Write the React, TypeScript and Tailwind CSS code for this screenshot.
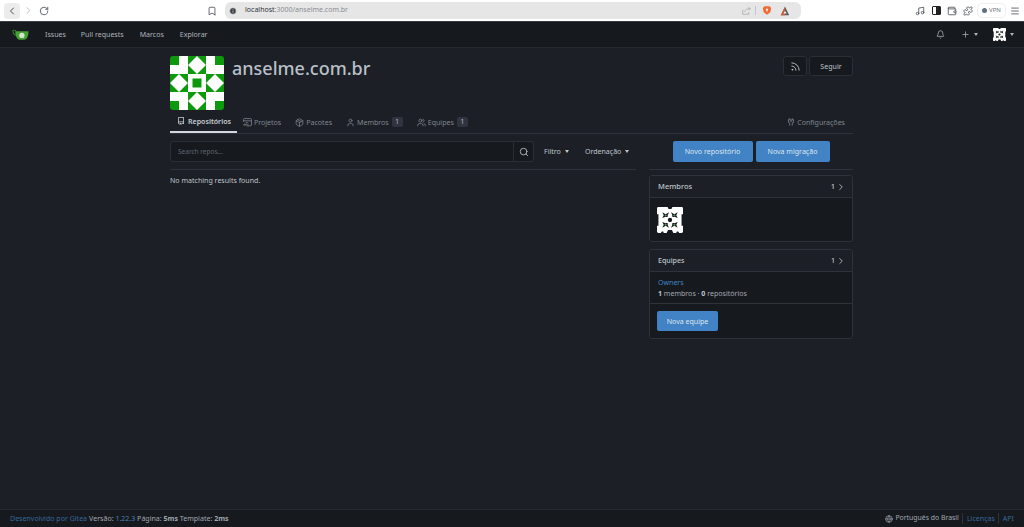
import { Bell, Bookmark, ChevronLeft, ChevronRight, Globe, Info, Menu, Music, Package, Plus, Puzzle, RotateCw, Rss, Search, User, Users, Wallet } from 'lucide-react';
import type { ReactNode } from 'react';

function Caret() {
  return <span className="ml-[4px] inline-block w-0 h-0 border-x-[2.5px] border-x-transparent border-t-[3px] border-t-current" />;
}

function Counter({ value }: { value: number }) {
  return <span className="ml-[1px] w-[11px] h-[10px] leading-[10px] text-center rounded-[2px] bg-[#2f3440] text-[#b8bdc5] text-[6.5px]">{value}</span>;
}

function RepoIcon() {
  return (
    <svg viewBox="0 0 16 16" fill="currentColor" className="w-[8px] h-[8px] shrink-0 mr-[1px]">
      <path d="M2 2.5A2.5 2.5 0 0 1 4.5 0h8.75a.75.75 0 0 1 .75.75v12.5a.75.75 0 0 1-.75.75h-2.5a.75.75 0 0 1 0-1.5h1.75v-2h-8a1 1 0 0 0-.714 1.7.75.75 0 1 1-1.072 1.05A2.495 2.495 0 0 1 2 11.5Zm10.5-1h-8a1 1 0 0 0-1 1v6.708A2.486 2.486 0 0 1 4.5 9h8ZM5 12.25a.25.25 0 0 1 .25-.25h3.5a.25.25 0 0 1 .25.25v3.25a.25.25 0 0 1-.4.2l-1.45-1.087a.249.249 0 0 0-.3 0L5.4 15.7a.25.25 0 0 1-.4-.2Z" />
    </svg>
  );
}

function ProjectIcon() {
  return (
    <svg viewBox="0 0 16 16" fill="none" stroke="currentColor" strokeWidth="1.4" className="w-[9px] h-[9px] shrink-0">
      <path d="M1 7V2.5A1.5 1.5 0 0 1 2.5 1h11A1.5 1.5 0 0 1 15 2.5v10a1.5 1.5 0 0 1-1.5 1.5H6" />
      <path d="M1 5h14 M5 8h3 M5 11h5 M0.5 12h3.5 M3 10l1.5 2L3 14" />
    </svg>
  );
}

function ToolsIcon() {
  return (
    <svg viewBox="0 0 16 16" fill="currentColor" className="w-[8px] h-[8px] shrink-0">
      <path d="M5.433 2.304A4.492 4.492 0 0 0 3.5 6c0 1.598.832 3.002 2.09 3.802.518.328.929.923.902 1.64v.008l-.164 3.337a.75.75 0 1 1-1.498-.073l.163-3.33c.002-.085-.05-.216-.207-.316A5.996 5.996 0 0 1 2 6a5.993 5.993 0 0 1 2.567-4.92 1.482 1.482 0 0 1 1.673-.04c.462.296.76.827.76 1.423v2.82c0 .082.041.16.11.206l.75.51a.25.25 0 0 0 .28 0l.75-.51A.249.249 0 0 0 9 5.282V2.463c0-.596.298-1.127.76-1.423a1.482 1.482 0 0 1 1.673.04A5.993 5.993 0 0 1 14 6a5.996 5.996 0 0 1-2.786 5.068c-.157.1-.209.23-.207.315l.163 3.33a.752.752 0 0 1-1.094.714.75.75 0 0 1-.404-.64l-.164-3.345c-.027-.717.384-1.312.902-1.64A4.495 4.495 0 0 0 12.5 6a4.492 4.492 0 0 0-1.933-3.696c-.024.017-.067.067-.067.16v2.818a1.75 1.75 0 0 1-.767 1.448l-.75.51a1.75 1.75 0 0 1-1.966 0l-.75-.51A1.75 1.75 0 0 1 5.5 5.282V2.463c0-.092-.043-.142-.067-.159Z" />
    </svg>
  );
}

function RepoAvatar() {
  return (
    <svg viewBox="0 0 54 54" className="w-[54px] h-[54px] rounded-[3px] shrink-0">
      <rect width="54" height="54" fill="#0c9a0c" />
      <path d="M9 0h9v18H0V9h9z M36 0h9v9h9v9H36z M0 36h18v18H9v-9H0z M36 36h18v9h-9v9h-9z" fill="#fff" />
      <path d="M27 0l9 9-9 9-9-9z M27 36l9 9-9 9-9-9z M9 18l9 9-9 9-9-9z M45 18l9 9-9 9-9-9z" fill="#fff" />
      <path d="M18 18h18v18H18z" fill="#fff" />
      <path d="M22.500 22.500h9v9h-9z" fill="#0c9a0c" />
    </svg>
  );
}

function MemberAvatar({ size }: { size: string }) {
  return (
    <svg viewBox="0 0 54 54" className={size + ' shrink-0'}>
      <rect width="54" height="54" fill="#fff" rx="3" />
      {/* edge notches */}
      <path d="M0 15h3v24H0z M51 15h3v24h-3z M22 0h10l-2 4h-6z M20 54l3-6h8l3 6z M8 54l2-3h3l1 3z M40 54l1-3h3l2 3z" fill="#16191e" />
      {/* dark X marks round the ring */}
      <path d="M11 11l7 4 7-4-3 6 3 6-7-3-7 3 3-6z M29 11l7 4 7-4-3 6 3 6-7-3-7 3 3-6z M11 31l7 3 7-3-3 6 3 6-7-4-7 4 3-6z M29 31l7 3 7-3-3 6 3 6-7-4-7 4 3-6z" fill="#16191e" />
      <path d="M18 15l2.500 2.500L18 20l-2.500-2.500z M36 15l2.500 2.500L36 20l-2.500-2.500z M18 34.500l2.500 2.500L18 39.500 15.500 37z M36 34.500l2.500 2.500L36 39.500 33.500 37z" fill="#4f9a58" />
      <circle cx="27" cy="27" r="8.500" fill="#fff" />
      <circle cx="27" cy="27" r="4.500" fill="#16191e" />
    </svg>
  );
}

function GiteaLogo() {
  return (
    <svg viewBox="0 0 18 12" className="w-[17px] h-[12px]">
      <path d="M0.500 1.200c1.500-0.400 3 0 4 0.500 M1 1.500C1 4 2.500 6 5 6.500" fill="none" stroke="#2f7d25" strokeWidth="1.2" />
      <path d="M3.500 2h14c0 3.500-1 9-5 9H8C5 11 3.500 6 3.500 2z" fill="#45a035" />
      <circle cx="10.500" cy="6.500" r="2.800" fill="#cfe6c8" />
    </svg>
  );
}

function Tab({ icon, label, count, active }: { icon: ReactNode; label: string; count?: number; active?: boolean }) {
  return (
    <div className={active ? 'flex items-center gap-[2px] pl-[7px] pr-[6px] mr-[-1px] pt-[2px] h-[24px] border-b-2 border-[#d2d7de] text-[#c9ced5] font-semibold' : 'flex items-center gap-[2px] px-[7px] pt-[2px] h-[24px] text-[#7f8691]'}>
      {icon}
      <span>{label}</span>
      {count !== undefined && <Counter value={count} />}
    </div>
  );
}

function BoxCount() {
  return <span className="flex items-center">1<ChevronRight size={10} className="ml-[1px]" /></span>;
}

function BrowserBar() {
  return (
    <div className="h-[22px] shrink-0 bg-white flex items-center text-[#4a4f57] border-b border-[#3a3d42]">
      <div className="ml-[4px] w-[16px] h-[16px] rounded-[4px] bg-[#ececec] flex items-center justify-center"><ChevronLeft size={12} /></div>
      <ChevronRight size={11} className="ml-[3px] text-[#b4b7bb]" />
      <RotateCw size={10} className="ml-[5px]" />
      <Bookmark size={10} className="ml-[158px]" />
      <div className="ml-[8px] w-[576px] h-[17px] rounded-[6px] bg-[#e6e6e7] flex items-center pl-[4px] pr-[11px]">
        <Info size={8} fill="#3c4046" stroke="#e6e6e7" />
        <span className="ml-[8px] text-[7px] text-[#8a8d92]"><span className="text-[#2f3237]">localhost</span>:3000/anselme.com.br</span>
        <svg viewBox="0 0 12 12" fill="none" stroke="#a6a8ab" strokeWidth="1" className="ml-auto w-[9px] h-[9px]">
          <path d="M1 5v6h8V8 M4 8c0-3 2-4.500 7-4.500 M8.500 1l2.500 2.500-2.500 2.500" />
        </svg>
        <span className="ml-[4px] w-px h-[9px] bg-[#c4c5c7]" />
        <svg viewBox="0 0 12 12" className="ml-[6px] w-[10px] h-[11px]"><path d="M3 1h6l2 2-1 5-4 3-4-3-1-5z" fill="#ef6a33" /><path d="M4.500 4h3L6 8z" fill="#fff" /></svg>
        <svg viewBox="0 0 12 12" className="ml-[8px] w-[10px] h-[10px]"><path d="M6 1l5 10H1z" fill="#55595f" /><path d="M6 1L1 11h5z" fill="#d9552b" /><path d="M6 6l2 3H4z" fill="#fff" /></svg>
      </div>
      <Music size={10} className="ml-[114px]" />
      <div className="ml-[7px] w-[9px] h-[9px] rounded-[1px] border border-[#222] flex justify-end"><span className="w-[4px] bg-[#222]" /></div>
      <Wallet size={10} className="ml-[6px]" />
      <Puzzle size={10} className="ml-[6px]" />
      <div className="ml-[4px] h-[15px] w-[29px] rounded-[5px] border border-[#efefef] flex items-center justify-center gap-[2px] text-[6px] text-[#70757c]">
        <span className="w-[5px] h-[5px] rounded-full bg-[#5f6f82]" />VPN
      </div>
      <Menu size={10} className="ml-[4px]" />
    </div>
  );
}

export default function App() {
  return (
    <div className="w-[1024px] h-[527px] overflow-hidden flex flex-col bg-[#1c1f25] text-[7.05px] text-[#bfc5cc] font-['Noto_Sans','Liberation_Sans',sans-serif]">
      <BrowserBar />

      <nav className="h-[26px] bg-[#16191e] border-b border-[#262a31] flex items-center shrink-0 text-[#aeb4bc]">
        <div className="ml-[12px] flex"><GiteaLogo /></div>
        <span className="ml-[16px]">Issues</span>
        <span className="ml-[15px]">Pull requests</span>
        <span className="ml-[16px]">Marcos</span>
        <span className="ml-[16px]">Explorar</span>
        <Bell size={9} className="ml-auto" />
        <div className="ml-[16px] flex items-center"><Plus size={9} /><Caret /></div>
        <div className="ml-[15px] mr-[10px] flex items-center"><MemberAvatar size="w-[13px] h-[13px]" /><Caret /></div>
      </nav>

      <main className="flex-1 pl-[170px] pr-[171px] pt-[8px]">
        <div className="flex items-start">
          <RepoAvatar />
          <h1 className="ml-[8px] text-[18px] leading-[24px] font-medium text-[#b9c0c8]">anselme.com.br</h1>
          <div className="ml-auto flex gap-[2px]">
            <div className="w-[24px] h-[20px] rounded-[3px] border border-[#2a2e36] bg-[#16191e] flex items-center justify-center"><Rss size={11} /></div>
            <div className="w-[44px] h-[20px] rounded-[3px] border border-[#2a2e36] bg-[#16191e] flex items-center justify-center">Seguir</div>
          </div>
        </div>

        <div className="flex items-end border-b border-[#2e323a] h-[24px]">
          <Tab active icon={<RepoIcon />} label="Repositórios" />
          <Tab icon={<ProjectIcon />} label="Projetos" />
          <Tab icon={<Package size={9} />} label="Pacotes" />
          <Tab icon={<User size={9} />} label="Membros" count={1} />
          <Tab icon={<Users size={9} />} label="Equipes" count={1} />
          <div className="ml-auto mr-[8px] pt-[2px] h-[24px] flex items-center gap-[2px] text-[#7f8691]"><ToolsIcon />Configurações</div>
        </div>

        <div className="mt-[7px] flex gap-[13px]">
          <div className="w-[466px] shrink-0">
            <div className="h-[21px] flex items-center">
              <div className="w-[344px] shrink-0 h-[21px] rounded-l-[3px] border border-[#2a2e36] bg-[#16191e] pl-[7px] flex items-center text-[#5f6672] text-[6.5px]">Search repos...</div>
              <div className="w-[20px] shrink-0 h-[21px] rounded-r-[3px] border border-l-0 border-[#2a2e36] bg-[#16191e] flex items-center justify-center"><Search size={10} /></div>
              <div className="ml-[10px] flex items-center">Filtro<Caret /></div>
              <div className="ml-[16px] flex items-center">Ordenação<Caret /></div>
            </div>
            <div className="mt-[7px] border-t border-[#2e323a] pt-[5px] text-[#bfc5cc]">No matching results found.</div>
          </div>

          <aside className="flex-1 flex flex-col">
            <div className="h-[21px] flex justify-center gap-[3px] text-[#dfe6ee]">
              <div className="w-[80px] rounded-[2px] bg-[#4183c4] flex items-center justify-center">Novo repositório</div>
              <div className="w-[74px] rounded-[2px] bg-[#4183c4] flex items-center justify-center">Nova migração</div>
            </div>
            <div className="mt-[7px] border-t border-[#2e323a]" />

            <section className="mt-[5px] rounded-[3px] border border-[#2e323a] bg-[#16191e]">
              <div className="h-[22px] bg-[#1c1f25] border-b border-[#2e323a] rounded-t-[3px] pl-[8px] pr-[6px] flex items-center justify-between text-[7.5px] font-medium">
                <span>Membros</span>
                <BoxCount />
              </div>
              <div className="h-[43px] pl-[7px] flex items-center"><MemberAvatar size="w-[26px] h-[26px]" /></div>
            </section>

            <section className="mt-[7px] rounded-[3px] border border-[#2e323a] bg-[#16191e]">
              <div className="h-[22px] bg-[#1c1f25] border-b border-[#2e323a] rounded-t-[3px] pl-[8px] pr-[6px] flex items-center justify-between font-medium">
                <span>Equipes</span>
                <BoxCount />
              </div>
              <div className="h-[32px] px-[8px] flex flex-col justify-center border-b border-[#2e323a] leading-[11px]">
                <span className="text-[#4183c4]">Owners</span>
                <span className="text-[#a1a7b0]"><b className="text-[#bfc5cc]">1</b> membros · <b className="text-[#bfc5cc]">0</b> repositórios</span>
              </div>
              <div className="h-[34px] pl-[7px] flex items-center">
                <div className="w-[61px] h-[20px] rounded-[2px] bg-[#4183c4] flex items-center justify-center text-[#dfe6ee]">Nova equipe</div>
              </div>
            </section>
          </aside>
        </div>
      </main>

      <footer className="h-[18px] shrink-0 bg-[#16191e] border-t border-[#262a31] flex items-center px-[10px] text-[7.05px] text-[#a1a7b0]">
        <span className="text-[#37689a]">Desenvolvido por Gitea</span>
        <span className="ml-[2px]">Versão: <span className="text-[#4a7fb3]">1.22.3</span> Página: <b>5ms</b> Template: <b>2ms</b></span>
        <Globe size={8} className="ml-auto" />
        <span className="ml-[2px] text-[6.9px]">Português do Brasil</span>
        <span className="ml-[3px] pl-[4px] border-l border-[#2e323a] text-[#37689a]">Licenças</span>
        <span className="ml-[3px] pl-[4px] border-l border-[#2e323a] text-[#37689a]">API</span>
      </footer>
    </div>
  );
}
